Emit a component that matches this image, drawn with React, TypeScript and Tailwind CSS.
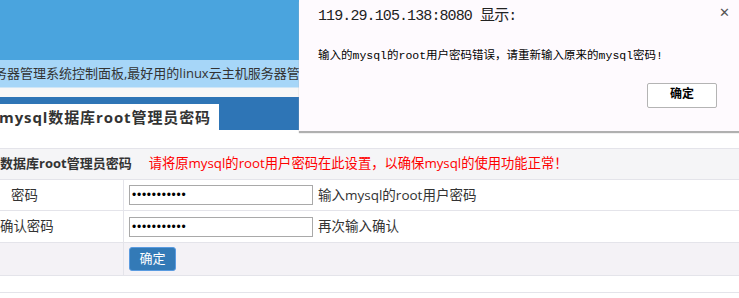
const pageFont = { fontFamily: '"Open Sans", "Noto Sans CJK SC", sans-serif' }
const dlgFont = { fontFamily: '"Liberation Mono", "Noto Sans CJK SC", monospace' }

function Dots() {
  return (
    <span className="text-[12px] leading-none tracking-[0.75px] text-black" style={{ fontFamily: '"Liberation Sans", sans-serif' }}>
      •••••••••••
    </span>
  )
}

export default function App() {
  return (
    <div className="relative w-[739px] h-[298px] overflow-hidden bg-white" style={pageFont}>
      {/* page behind */}
      <div className="h-[60px] bg-[#4aa4de]" />
      <div className="h-[28px] bg-[#a6d6f8] flex items-center border-b border-[#cfe6f7] overflow-hidden whitespace-nowrap">
        <span className="-ml-[6px] text-[13px] text-[#333]">务器管理系统控制面板,最好用的linux云主机服务器管理系统</span>
      </div>
      <div className="h-[9px] bg-[#f7f7f7]" />
      <div className="h-[33px] bg-[#2e75b6] flex items-end">
        <div className="w-[219px] h-[26px] bg-white flex items-center overflow-hidden whitespace-nowrap">
          <span className="-ml-[1px] text-[15px] font-bold tracking-[0.9px] text-[#333]">mysql数据库root管理员密码</span>
        </div>
      </div>
      <div className="h-[18px]" />
      <div className="border-t border-[#e4e4ea]">
        <div className="h-[31px] bg-[#f5f5f7] flex items-center gap-[17px] whitespace-nowrap border-b border-[#e4e4ea]">
          <span className="text-[13px] font-bold text-[#333]">数据库root管理员密码</span>
          <span className="text-[13.3px] text-[#ff0000]">请将原mysql的root用户密码在此设置，以确保mysql的使用功能正常！</span>
        </div>
        <div className="grid grid-cols-[124px_1fr]">
          <div className="h-[31px] flex items-center pl-[11px] border-r border-b border-[#e4e4ea] text-[13.4px] text-[#333]">密码</div>
          <div className="h-[31px] flex items-center pl-[5px] border-b border-[#e4e4ea]">
            <div className="w-[184px] h-[20px] border border-[#a9a9a9] bg-white flex items-center pl-[2px]"><Dots /></div>
            <span className="ml-[5px] text-[13.5px] text-[#333]">输入mysql的root用户密码</span>
          </div>
          <div className="h-[32px] flex items-center border-r border-b border-[#e4e4ea] text-[13.4px] text-[#333]">确认密码</div>
          <div className="h-[32px] flex items-center pl-[5px] border-b border-[#e4e4ea]">
            <div className="w-[184px] h-[20px] border border-[#a9a9a9] bg-white flex items-center pl-[2px]"><Dots /></div>
            <span className="ml-[5px] text-[13.5px] text-[#333]">再次输入确认</span>
          </div>
          <div className="h-[33px] bg-[#f4f2f6] border-r border-b border-[#e4e4ea]" />
          <div className="h-[33px] bg-[#f4f2f6] flex items-center pl-[5px] border-b border-[#e4e4ea]">
            <button className="w-[47px] h-[24px] rounded-[3px] bg-[#337ab7] border border-[#5a9be0] text-white text-[13px]">确定</button>
          </div>
        </div>
        <div className="h-[17px] border-b border-[#e4e4ea]" />
      </div>

      {/* alert dialog */}
      <div className="absolute left-[299px] top-0 w-[445px] h-[131px] bg-[#fefafe] shadow-[0_2px_1px_#b0b0b0] flex flex-col" style={dlgFont}>
        <div className="flex justify-between pl-[19px] pr-[14px] pt-[6px]">
          <span className="text-[15px] tracking-[-0.9px] text-[#222]">119.29.105.138:8080 显示:</span>
          <span className="text-[13px] text-[#555] font-sans leading-none">✕</span>
        </div>
        <div className="pl-[19px] mt-[18px] text-[11.5px] text-black whitespace-nowrap">
          输入的mysql的root用户密码错误，请重新输入原来的mysql密码!
        </div>
        <div className="flex justify-end pr-[27px] mt-[19px]">
          <button className="w-[70px] h-[25px] border border-[#b4b4b4] rounded-[2px] bg-white text-[12px] font-bold text-black">确定</button>
        </div>
      </div>
    </div>
  )
}
